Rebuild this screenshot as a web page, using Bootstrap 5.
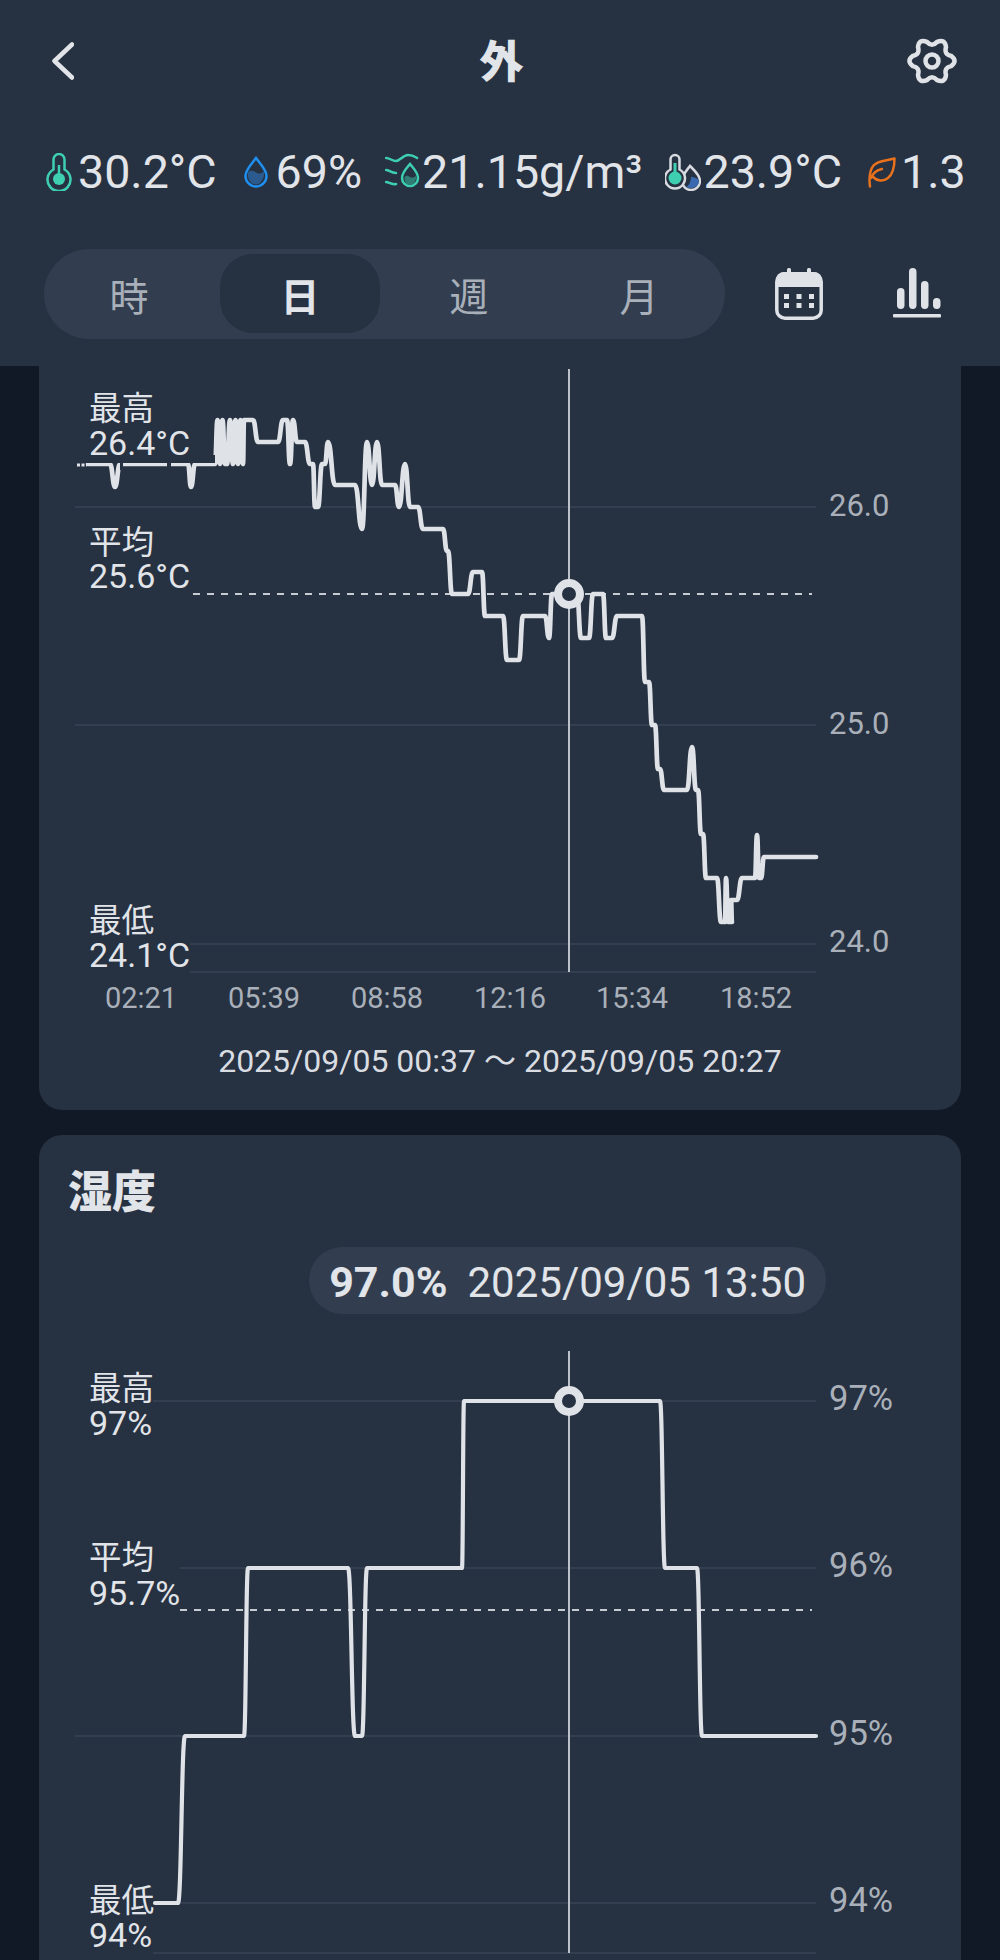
<!DOCTYPE html>
<html lang="ja">
<head>
    <meta charset="UTF-8">
    <meta name="viewport" content="width=device-width, initial-scale=1.0">
    <title>外</title>
    <link href="https://cdn.jsdelivr.net/npm/bootstrap@5.3.0/dist/css/bootstrap.min.css" rel="stylesheet">
    <style>
        html, body { height: 1960px; overflow: hidden; }
        body { background: #111926; color: #e1e4e8; font-family: Roboto, "Noto Sans CJK JP", sans-serif; }
        .top-head { background: #263141; height: 366px; }
        .title-bar { height: 122px; padding: 0 43px 0 52px; }
        .title-side { flex: 1 1 0; }
        .page-title { font-size: 44px; font-weight: 900; line-height: 1; padding: 4px 6px 0 0; }
        .stat-row { margin: 20px 30px 0 46px; height: 60px; overflow: hidden; white-space: nowrap; }
        .stat-item { font-size: 46.600px; line-height: 60px; }
        .stat-item svg { flex-shrink: 0; }
        .stat-temp { gap: 6px; }
        .stat-hum { gap: 8px; margin-left: 27px; }
        .stat-abs { gap: 2px; margin-left: 23px; }
        .stat-dew { gap: 2px; margin-left: 23px; }
        .stat-voc { gap: 5px; margin-left: 26px; }
        .seg-row { margin-top: 47px; padding-left: 44px; }
        .seg-bar { width: 681px; height: 90px; background: #323e4f; border-radius: 45px; }
        .seg-item { width: 170px; height: 79px; margin: 5px 0 6px; font-size: 39px; color: #a9b0b9; border-radius: 33px; line-height: 88px; }
        .seg-item.active-seg { background: #263141; color: #e1e4e8; font-weight: 700; margin-left: 6px; margin-right: 4px; width: 160px; }
        .seg-icon-a { margin-left: 50px; }
        .seg-icon-b { margin-left: 70px; }
        .chart-card { background: #263141; border: 0; margin: 0 39px; border-radius: 23px; }
        .first-card { height: 744px; border-top-left-radius: 0; border-top-right-radius: 0; }
        .second-card { margin-top: 25px; height: 850px; }
        .range-text { font-size: 32px; line-height: 48px; padding-top: 17px; color: #d9dde2; }
        .card-title-text { font-size: 44px; font-weight: 900; line-height: 62px; margin: 27px 0 0 29px; }
        .point-pill { background: #323e4f; height: 67px; border-radius: 34px; padding: 4px 20px 0; margin: 23px 135px 0 auto; font-size: 42px; gap: 20px; color: #e1e4e8; }
        .point-value { font-size: 43px; font-weight: 700; }
        .chart-svg { display: block; flex-shrink: 0; }
        .grid-line { stroke: #333f50; stroke-width: 2; }
        .avg-line { stroke: #c7ccd2; stroke-width: 2; stroke-dasharray: 7 7; }
        .cursor-line { stroke: #bcc2c9; stroke-width: 2; }
        .data-line { fill: none; stroke: #dfe3e8; stroke-width: 4.700; stroke-linejoin: round; stroke-linecap: round; }
        .data-line.thin-line { stroke-width: 4.200; }
        .cursor-dot { fill: #263141; stroke: #dfe3e8; stroke-width: 8; }
        .side-label { fill: #e1e4e8; font-size: 34px; }
        .side-cjk { fill: #e1e4e8; font-size: 32.500px; }
        .axis-label { fill: #a9b0b9; font-size: 31px; }
        .axis-pct { fill: #a9b0b9; font-size: 34.500px; }
        .time-label { fill: #a9b0b9; font-size: 29px; text-anchor: middle; }
    </style>
</head>
<body>
    <!-- Header -->
    <div class="top-head">
        <div class="title-bar d-flex align-items-center">
            <div class="title-side d-flex">
                <svg width="22" height="38" viewBox="0 0 22 38"><polyline points="20,2.5 2.5,19 20,35.5" fill="none" stroke="#e1e4e8" stroke-width="4.5" stroke-linecap="round" stroke-linejoin="round"/></svg>
            </div>
            <div class="page-title">外</div>
            <div class="title-side d-flex justify-content-end">
                <svg width="50" height="50" viewBox="-25 -25 50 50"><path id="gearPath" fill="none" stroke="#dfe3e8" stroke-width="4.5"/><circle r="6.5" fill="none" stroke="#dfe3e8" stroke-width="4.5"/></svg>
            </div>
        </div>

        <div class="stat-row d-flex align-items-center">
            <div class="stat-item stat-temp d-flex align-items-center">
                <svg width="26" height="38" viewBox="0 0 26 38"><path d="M7.5 16.5V6.5a5.5 5.5 0 0 1 11 0v10a11.5 11.5 0 1 1-11 0z" fill="none" stroke="#3ecfb0" stroke-width="2.5"/><line x1="13" y1="12" x2="13" y2="24" stroke="#3ecfb0" stroke-width="2.5"/><circle cx="13" cy="26" r="6" fill="#3ecfb0"/></svg>
                <span>30.2°C</span>
            </div>
            <div class="stat-item stat-hum d-flex align-items-center">
                <svg width="24" height="32" viewBox="0 0 24 32"><path d="M4 16.5c2.500-2.500 5-2 8 0s5 1 8-1c.8 5.500-2.500 13-8 13s-9-6-8-12z" fill="#2a5a8e"/><path d="M12 2C8 7.500 1.500 13.500 1.500 20a10.500 10.500 0 0 0 21 0C22.500 13.500 16 7.500 12 2z" fill="none" stroke="#1f8ff0" stroke-width="2.500"/></svg>
                <span>69%</span>
            </div>
            <div class="stat-item stat-abs d-flex align-items-center">
                <svg width="35" height="38" viewBox="0 0 35 38"><g fill="none" stroke="#3ecfb0" stroke-width="2.500" stroke-linecap="round"><path d="M1 5c4 0 6 3 10 3s7-6 12-6 6 1 9 3"/><path d="M1 17c3 0 5 3 10 3"/><path d="M1 29c3 0 5 3 10 2"/><path d="M25 11c-3 4-8 8-8 14a8 8 0 0 0 16 0C33 19 28 15 25 11z"/></g><path d="M19.500 24c2-2 3.500-1 5.500 0s3 1 6-1c.5 5-2 9-6 9s-6-4-5.500-8z" fill="#2f7e75"/></svg>
                <span>21.15g/m³</span>
            </div>
            <div class="stat-item stat-dew d-flex align-items-center">
                <svg width="36" height="38" viewBox="0 0 36 38"><path d="M25 13c-3 4-8 9-8 15a9 9 0 0 0 18 0c0-6-6-11-10-15z" fill="#263141" stroke="#d7dbe0" stroke-width="2.500"/><path d="M21 34c3-1 5-6 5-10 3 0 7 1 8 4 0 5-6 9-13 6z" fill="#3a69b0"/><path d="M5.500 16.500V6.500a4.500 4.500 0 0 1 9 0v10a10 10 0 1 1-9 0z" fill="#263141" stroke="#d7dbe0" stroke-width="2.500"/><line x1="10" y1="10" x2="10" y2="24" stroke="#3ecfb0" stroke-width="3"/><circle cx="10" cy="25" r="6.500" fill="#3ecfb0"/></svg>
                <span>23.9°C</span>
            </div>
            <div class="stat-item stat-voc d-flex align-items-center">
                <svg width="28" height="31" viewBox="0 0 28 31"><g fill="none" stroke="#e8711c" stroke-width="2.500" stroke-linecap="round" stroke-linejoin="round"><path d="M2 29.500C1 22 2 13 5.500 8.500 10 3.500 18 4 26.500 1.500 26.500 10 25 17 20 21 15 25 9 24 5 20"/><path d="M3 21c2-5 6-8 11-9"/></g></svg>
                <span>1.3</span>
            </div>
        </div>

        <div class="seg-row d-flex align-items-center">
            <div class="seg-bar d-flex">
                <div class="seg-item text-center">時</div>
                <div class="seg-item active-seg text-center">日</div>
                <div class="seg-item text-center">週</div>
                <div class="seg-item text-center">月</div>
            </div>
            <svg class="seg-icon-a" width="48" height="52" viewBox="0 0 48 52">
                <rect x="1.800" y="5.800" width="44.400" height="44.400" rx="8" fill="none" stroke="#dfe3e8" stroke-width="3.500"/>
                <path d="M9 4h30a8 8 0 0 1 8 8v7H1v-7a8 8 0 0 1 8-8z" fill="#dfe3e8"/>
                <rect x="12" y="0" width="4" height="6" rx="1.500" fill="#dfe3e8"/><rect x="32" y="0" width="4" height="6" rx="1.500" fill="#dfe3e8"/>
                <g fill="#dfe3e8"><rect x="9" y="26" width="5" height="5"/><rect x="21.500" y="26" width="5" height="5"/><rect x="34" y="26" width="5" height="5"/><rect x="9" y="35" width="5" height="5"/><rect x="21.500" y="35" width="5" height="5"/><rect x="34" y="35" width="5" height="5"/></g>
            </svg>
            <svg class="seg-icon-b" width="48" height="52" viewBox="0 0 48 52">
                <g fill="#dfe3e8"><rect x="4" y="20" width="7.500" height="21" rx="3.700"/><rect x="16" y="0" width="7.500" height="41" rx="3.700"/><rect x="28" y="13" width="7.500" height="28" rx="3.700"/><rect x="40" y="30" width="7.500" height="11" rx="3.700"/><rect x="0" y="46" width="48" height="3.500" rx="1"/></g>
            </svg>
        </div>
    </div>

    <!-- Temperature chart -->
    <div class="card chart-card first-card">
        <svg class="chart-svg" width="922" height="654" viewBox="39 366 922 654">
            <line class="grid-line" x1="75" x2="816" y1="507" y2="507"/>
            <line class="grid-line" x1="75" x2="816" y1="725" y2="725"/>
            <line class="grid-line" x1="190" x2="816" y1="944" y2="944"/>
            <line class="grid-line" x1="190" x2="816" y1="972" y2="972"/>
            <line class="avg-line" x1="193" x2="812" y1="594" y2="594"/>
            <line class="cursor-line" x1="569" x2="569" y1="369" y2="972"/>
            <line x1="77" x2="87" y1="465" y2="465" stroke="#dfe3e8" stroke-width="3" stroke-dasharray="3 1.500"/>
            <path class="data-line" id="tempPath"/>
            <rect x="75" y="455" width="140" height="8" fill="#263141"/>
            <rect x="120" y="458" width="3" height="12" fill="#263141"/>
            <rect x="167" y="458" width="4" height="12" fill="#263141"/>
            <circle class="cursor-dot" cx="569" cy="594" r="11"/>
            <text class="side-cjk" x="89" y="420">最高</text>
            <text class="side-label" x="89" y="455">26.4°C</text>
            <text class="side-cjk" x="89" y="554">平均</text>
            <text class="side-label" x="89" y="588">25.6°C</text>
            <text class="side-cjk" x="89" y="932">最低</text>
            <text class="side-label" x="89" y="967">24.1°C</text>
            <text class="axis-label" x="829" y="516">26.0</text>
            <text class="axis-label" x="829" y="734">25.0</text>
            <text class="axis-label" x="829" y="952">24.0</text>
            <text class="time-label" x="141" y="1008">02:21</text>
            <text class="time-label" x="264" y="1008">05:39</text>
            <text class="time-label" x="387" y="1008">08:58</text>
            <text class="time-label" x="510" y="1008">12:16</text>
            <text class="time-label" x="632" y="1008">15:34</text>
            <text class="time-label" x="756" y="1008">18:52</text>
        </svg>
        <div class="range-text text-center">2025/09/05 00:37 〜 2025/09/05 20:27</div>
    </div>

    <!-- Humidity chart -->
    <div class="card chart-card second-card">
        <div class="card-title-text">湿度</div>
        <div class="point-pill d-flex align-items-center"><span class="point-value">97.0%</span><span>2025/09/05 13:50</span></div>
        <svg class="chart-svg" width="922" height="660" viewBox="39 1314 922 660">
            <line class="grid-line" x1="153" x2="816" y1="1401" y2="1401"/>
            <line class="grid-line" x1="180" x2="816" y1="1568" y2="1568"/>
            <line class="grid-line" x1="75" x2="816" y1="1736" y2="1736"/>
            <line class="grid-line" x1="155" x2="816" y1="1903" y2="1903"/>
            <line class="grid-line" x1="153" x2="816" y1="1953" y2="1953"/>
            <line class="avg-line" x1="180" x2="812" y1="1610" y2="1610"/>
            <line class="cursor-line" x1="569" x2="569" y1="1351" y2="1953"/>
            <path class="data-line thin-line" id="humPath"/>
            <circle class="cursor-dot" cx="569" cy="1401" r="11"/>
            <text class="side-cjk" x="89" y="1400">最高</text>
            <text class="side-label" x="89" y="1435">97%</text>
            <text class="side-cjk" x="89" y="1569">平均</text>
            <text class="side-label" x="89" y="1605">95.7%</text>
            <text class="side-cjk" x="89" y="1912">最低</text>
            <text class="side-label" x="89" y="1947">94%</text>
            <text class="axis-pct" x="829" y="1410">97%</text>
            <text class="axis-pct" x="829" y="1577">96%</text>
            <text class="axis-pct" x="829" y="1745">95%</text>
            <text class="axis-pct" x="829" y="1912">94%</text>
        </svg>
    </div>

    <script src="https://cdn.jsdelivr.net/npm/bootstrap@5.3.0/dist/js/bootstrap.bundle.min.js"></script>
    <script>
        // points read off the reference, in page coordinates
        const tempPoints = [
            [88,464],[110,464],[115,487],[120,464],[188,464],[191,487],[195,464],[215,464],
            [217.500,420],[220,464],[222.500,420],[225,464],[227,464],[230,420],[233,464],[235.500,420],[238,464],[240.500,420],[243,464],[244,420],
            [253,420],[258,442],[278,442],[283,420],[287,420],[290,464],[293,420],[297,442],[305,442],[310,464],[313,464],
            [315,507],[318,507],[322,464],[325,464],[328,442],[335,485],[355,485],[362,529],[367,442],[372,485],[377,442],[382,485],
            [395,485],[399,507],[405,464],[410,507],[418,507],[423,529],[443,529],[447,551],[448,551],[452,594],
            [468,594],[473,572],[482,572],[485,616],[503,616],[507,660],[519,660],[523,616],[545,616],[549,638],[552,594],
            [577,594],[581,638],[589,638],[593,594],[603,594],[606,638],[612,638],[617,616],[642,616],[645,682],[649,682],
            [652,725],[655,725],[658,769],[660,769],[664,790],[687,790],[692,747],[696,790],[698,790],[701,834],[703,834],
            [706,878],[717,878],[721,922],[725,922],[726,878],[728,922],[732,922],[731,900],[737,900],[742,878],[755,878],
            [757,835],[759,878],[761,878],[764,857],[816,857]
        ];
        const humPoints = [
            [155,1903],[178,1903],[185,1736],[244,1736],[248,1568],[348,1568],[355,1736],[362,1736],[367,1568],
            [462,1568],[464,1401],[660,1401],[665,1568],[697,1568],[702,1736],[816,1736]
        ];

        function stepPath(points) {
            let d = `M${points[0][0]} ${points[0][1]}`;
            for (let i = 1; i < points.length; i++) {
                const [x0, y0] = points[i - 1];
                const [x1, y1] = points[i];
                const mid = (x0 + x1) / 2;
                d += ` C${mid} ${y0} ${mid} ${y1} ${x1} ${y1}`;
            }
            return d;
        }

        function gearShape() {
            const pt = (r, deg) => {
                const a = deg * Math.PI / 180;
                return `${(r * Math.cos(a)).toFixed(2)} ${(r * Math.sin(a)).toFixed(2)}`;
            };
            let d = `M${pt(19.8, -15)}`;
            for (let i = 0; i < 6; i++) {
                const a = i * 60;
                d += ` Q${pt(26, a)} ${pt(19.8, a + 15)} Q${pt(13.5, a + 30)} ${pt(19.8, a + 45)}`;
            }
            return d + 'Z';
        }

        document.getElementById('tempPath').setAttribute('d', stepPath(tempPoints));
        document.getElementById('humPath').setAttribute('d', stepPath(humPoints));
        document.getElementById('gearPath').setAttribute('d', gearShape());
    </script>
</body>
</html>
